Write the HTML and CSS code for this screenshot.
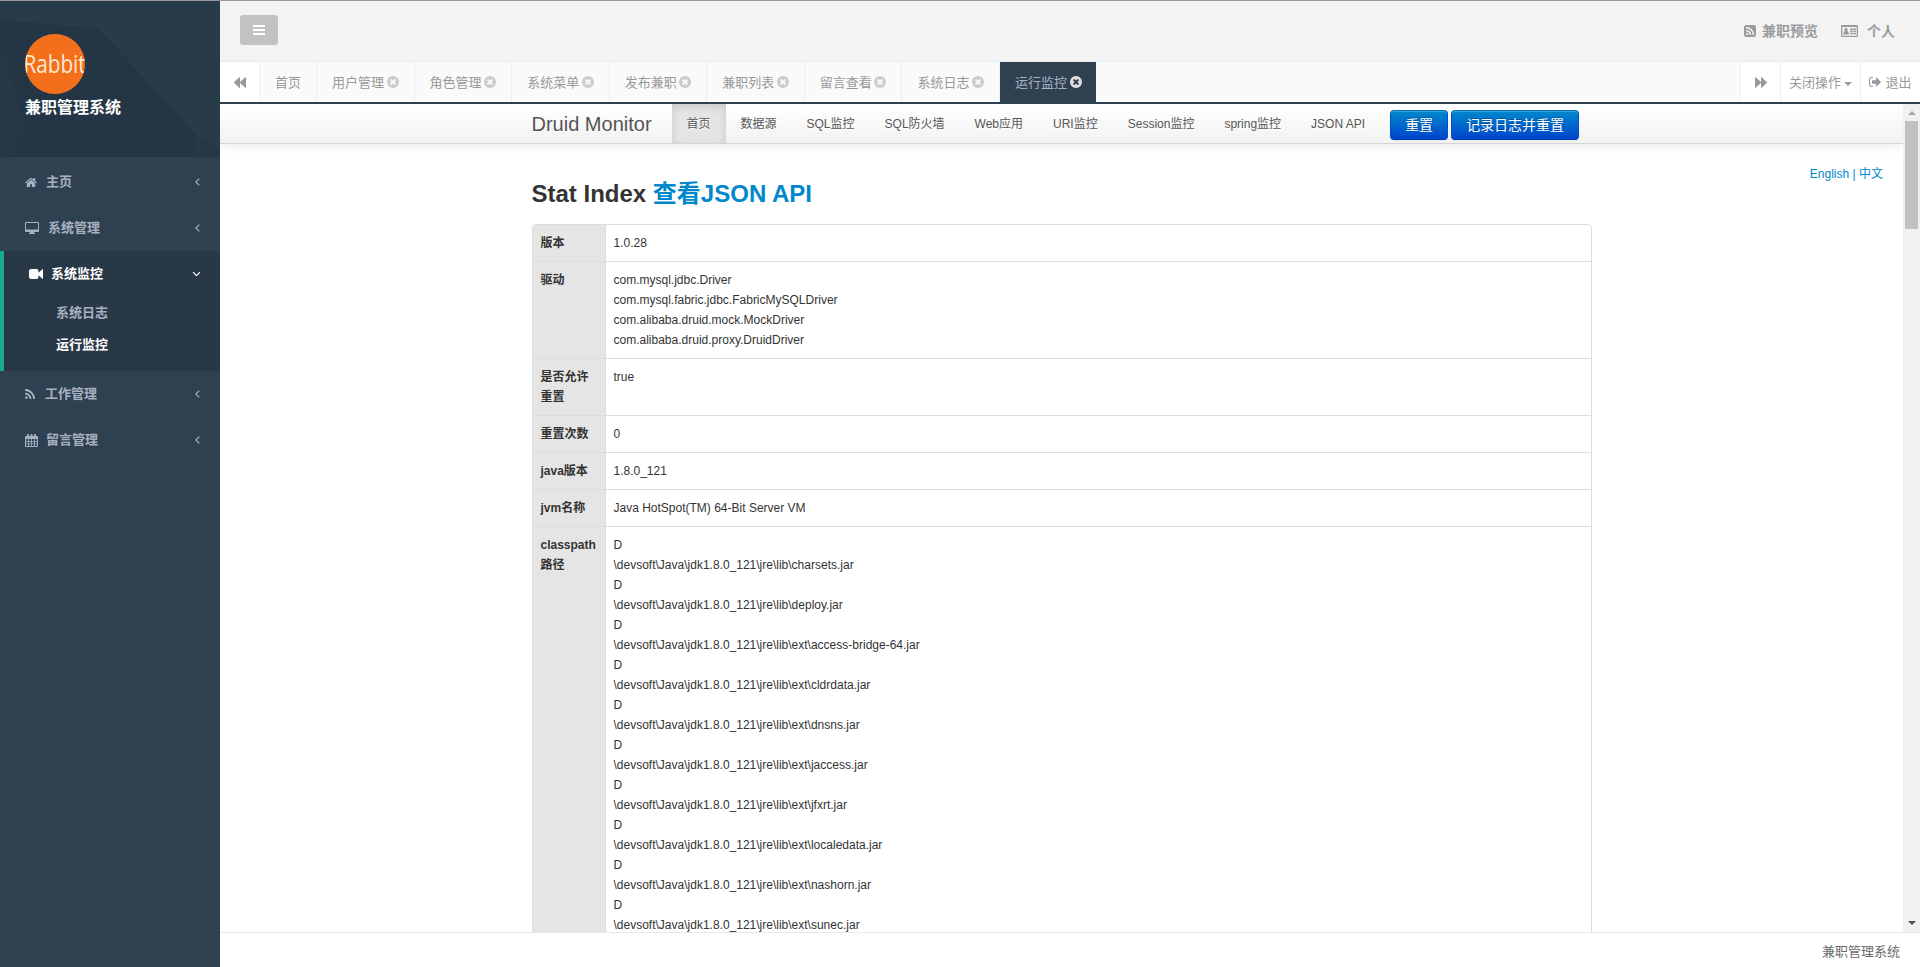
FILE: index.html
```html
<!DOCTYPE html>
<html lang="zh-CN">
  <head>
    <meta charset="UTF-8" />
    <meta name="viewport" content="width=device-width, initial-scale=1.0" />
    <title>兼职管理系统</title>
    <link rel="stylesheet" href="styles.css">
  </head>
  <body>
    <svg class="symbols">
      <symbol id="home" viewBox="64 192 1664 1408"><path d="M1472 992v480q0 26-19 45t-45 19h-384v-384h-256v384h-384q-26 0-45-19t-19-45v-480q0-1 .5-3t.5-3l575-474 575 474q1 2 1 6zm223-69l-62 74q-8 9-21 11h-3q-13 0-21-7l-692-577-692 577q-12 8-24 7-13-2-21-11l-62-74q-8-10-7-23.5t11-21.5l719-599q32-26 76-26t76 26l244 204v-195q0-14 9-23t23-9h192q14 0 23 9t9 23v408l219 182q10 8 11 21.5t-7 23.5z"/></symbol>
      <symbol id="rss" viewBox="192 128 1408 1408"><path d="M576 1344q0 80-56 136t-136 56-136-56-56-136 56-136 136-56 136 56 56 136zm512 123q2 28-17 48-18 21-47 21h-135q-25 0-43-16.5t-20-41.5q-22-229-184.5-391.5t-391.5-184.5q-25-2-41.5-20t-16.5-43v-135q0-29 21-47 17-17 43-17h5q160 13 306 80.5t259 181.5q114 113 181.5 259t80.5 306zm512 2q2 27-18 47-18 20-46 20h-143q-26 0-44.5-17.5t-19.5-42.5q-12-215-101-408.5t-231.5-336-336-231.5-408.5-102q-25-1-42.5-19.5t-17.5-43.5v-143q0-28 20-46 18-18 44-18h3q262 13 501.5 120t425.5 294q187 186 294 425.5t120 501.5z"/></symbol>
      <symbol id="close" viewBox="128 128 1536 1536"><path d="M1277 1122q0-26-19-45l-181-181 181-181q19-19 19-45 0-27-19-46l-90-90q-19-19-46-19-26 0-45 19l-181 181-181-181q-19-19-45-19-27 0-46 19l-90 90q-19 19-19 46 0 26 19 45l181 181-181 181q-19 19-19 45 0 27 19 46l90 90q19 19 46 19 26 0 45-19l181-181 181 181q19 19 45 19 27 0 46-19l90-90q19-19 19-46zm387-226q0 209-103 385.5t-279.5 279.5-385.5 103-385.5-103-279.5-279.5-103-385.5 103-385.5 279.5-279.5 385.5-103 385.5 103 279.5 279.5 103 385.5z"/></symbol>
      <symbol id="desktop" viewBox="0 0 14 12"><path fill-rule="evenodd" d="M1 0h12a1 1 0 0 1 1 1v8a1 1 0 0 1-1 1H9v1h1v1H4v-1h1v-1H1a1 1 0 0 1-1-1V1a1 1 0 0 1 1-1zm0 1v6.6h12V1z"/></symbol>
      <symbol id="video" viewBox="0 0 14 10"><path d="M2 0h5.5a2 2 0 0 1 2 2v1.8L13 .4q1-.5 1 .4v8.4q0 .9-1 .4L9.500 6.200V8a2 2 0 0 1-2 2H2a2 2 0 0 1-2-2V2a2 2 0 0 1 2-2z"/></symbol>
      <symbol id="calendar" viewBox="0 0 13 13"><path fill-rule="evenodd" d="M1 2h1V.8a.8.8 0 0 1 .8-.8h.4a.8.8 0 0 1 .8.800V2h1.500V.8a.8.8 0 0 1 .8-.8h.4a.8.8 0 0 1 .8.800V2H9V.8a.8.8 0 0 1 .8-.8h.4a.8.8 0 0 1 .8.800V2h1a1 1 0 0 1 1 1v9a1 1 0 0 1-1 1H1a1 1 0 0 1-1-1V3a1 1 0 0 1 1-1zM1 5v1.900h2V5zm2.800 0v1.900h2.300V5zm3.100 0v1.900h2.300V5zM10 5v1.900h2V5zM1 7.700v1.800h2V7.700zm2.800 0v1.800h2.300V7.700zm3.100 0v1.800h2.300V7.700zm3.100 0v1.800h2V7.700zM1 10.300V12h2v-1.700zm2.800 0V12h2.300v-1.700zm3.100 0V12h2.300v-1.700zm3.100 0V12h2v-1.700z"/></symbol>
      <symbol id="backward" viewBox="0 0 12 11"><path d="M6 0v5L11.300.2q.7-.5.7.3v10q0 .8-.7.3L6 6v4.500q0 .8-.7.3L.2 6q-.4-.5 0-1L5.300.2Q6-.3 6 .5z"/></symbol>
      <symbol id="rss-square" viewBox="0 0 12 12"><path fill-rule="evenodd" d="M2.200 0h7.600A2.200 2.200 0 0 1 12 2.200v7.600A2.200 2.200 0 0 1 9.800 12H2.200A2.200 2.200 0 0 1 0 9.800V2.200A2.200 2.200 0 0 1 2.200 0zM3 8a1 1 0 1 0 .01 0zM2 5v1.400Q5.500 6.700 5.800 10h1.400Q6.900 5.300 2 5zm0-3v1.400Q8.400 3.800 8.700 10H10Q9.700 2.300 2 2z"/></symbol>
      <symbol id="card" viewBox="0 0 17 12"><path fill-rule="evenodd" d="M1.200 0h14.600A1.200 1.200 0 0 1 17 1.200v9.600a1.200 1.200 0 0 1-1.200 1.200H1.200A1.200 1.200 0 0 1 0 10.800V1.200A1.200 1.200 0 0 1 1.200 0zM1.300 2v8.700h14.400V2z"/><path d="M5 3a1.700 1.700 0 0 1 1.200 2.900Q8 6.400 8 9.500H2.200Q2.200 6.400 3.900 5.900A1.700 1.700 0 0 1 5 3zM9 3.500h6v1.500H9zM9 5.700h2.700v1.500H9zm3.200 0H15v1.500h-2.800zM9 8h6v1.300H9z"/></symbol>
      <symbol id="sign-out" viewBox="0 0 12 10"><path d="M4 0v1.100H2.500Q1.100 1.100 1.100 2.500v5q0 1.400 1.400 1.400H4V10H2.300Q0 10 0 7.700V2.300Q0 0 2.300 0z"/><path d="M3.500 3.300H7V1.100q0-.8.7-.3l4 3.800q.4.400 0 .8l-4 3.800q-.7.500-.7-.3V6.700H3.500q-.5 0-.5-.5V3.800q0-.5.5-.5z"/></symbol>
      <symbol id="angle" viewBox="0 0 5 8"><path fill="none" stroke="currentColor" stroke-width="1.200" d="M4.300.600.900 4l3.400 3.400"/></symbol>
    </svg>

    <aside class="sidebar">
      <div class="profile">
        <svg class="profile-bg" viewBox="0 0 220 156" preserveAspectRatio="none">
          <path fill="#273b49" d="M0 0h120L99 28 0 19z"/>
          <path fill="#283b49" d="M120 0h100v146l-24-12L99 28z"/>
          <path fill="#243645" d="M99 28l97 106v22H0V19z"/>
          <path fill="#253847" d="M0 40l25 83-15 33H0z"/>
        </svg>
        <div class="logo"><span>Rabbit</span></div>
        <strong class="profile-name">兼职管理系统</strong>
      </div>
      <ul class="menu">
        <li><a href="#"><svg class="i-home"><use href="#home"/></svg>主页<svg class="arrow"><use href="#angle"/></svg></a></li>
        <li><a href="#"><svg class="i-desktop"><use href="#desktop"/></svg>系统管理<svg class="arrow"><use href="#angle"/></svg></a></li>
        <li class="active">
          <a href="#"><svg class="i-video"><use href="#video"/></svg>系统监控<svg class="arrow open"><use href="#angle"/></svg></a>
          <ul class="submenu">
            <li><a href="#">系统日志</a></li>
            <li><a href="#" class="current">运行监控</a></li>
          </ul>
        </li>
        <li><a href="#"><svg class="i-rss"><use href="#rss"/></svg>工作管理<svg class="arrow"><use href="#angle"/></svg></a></li>
        <li><a href="#"><svg class="i-calendar"><use href="#calendar"/></svg>留言管理<svg class="arrow"><use href="#angle"/></svg></a></li>
      </ul>
    </aside>

    <div class="page">
      <header class="topbar">
        <button class="toggle"><span></span><span></span><span></span></button>
        <div class="toplinks">
          <a href="#"><svg class="i-square"><use href="#rss-square"/></svg>兼职预览</a>
          <a href="#"><svg class="i-card"><use href="#card"/></svg>个人</a>
        </div>
      </header>

      <nav class="tabs">
        <button class="tab-btn roll"><svg><use href="#backward"/></svg></button>
        <div class="tab-list">
          <a href="#" class="home-tab">首页</a>
          <a href="#">用户管理<svg><use href="#close"/></svg></a>
          <a href="#">角色管理<svg><use href="#close"/></svg></a>
          <a href="#">系统菜单<svg><use href="#close"/></svg></a>
          <a href="#">发布兼职<svg><use href="#close"/></svg></a>
          <a href="#">兼职列表<svg><use href="#close"/></svg></a>
          <a href="#">留言查看<svg><use href="#close"/></svg></a>
          <a href="#">系统日志<svg><use href="#close"/></svg></a>
          <a href="#" class="active">运行监控<svg><use href="#close"/></svg></a>
        </div>
        <button class="tab-btn roll right"><svg><use href="#backward"/></svg></button>
        <button class="tab-btn ops">关闭操作<span class="caret"></span></button>
        <button class="tab-btn exit"><svg><use href="#sign-out"/></svg>退出</button>
      </nav>

      <div class="frame">
        <main class="druid">
          <div class="navbar">
            <div class="container">
              <a href="#" class="brand">Druid Monitor</a>
              <ul class="nav">
                <li class="active"><a href="#">首页</a></li>
                <li><a href="#">数据源</a></li>
                <li><a href="#">SQL监控</a></li>
                <li><a href="#">SQL防火墙</a></li>
                <li><a href="#">Web应用</a></li>
                <li><a href="#">URI监控</a></li>
                <li><a href="#">Session监控</a></li>
                <li><a href="#">spring监控</a></li>
                <li><a href="#">JSON API</a></li>
              </ul>
              <button class="btn">重置</button>
              <button class="btn">记录日志并重置</button>
            </div>
          </div>
          <div class="lang"><a href="#">English</a> | <a href="#">中文</a></div>
          <div class="container content">
            <h3>Stat Index <a href="#">查看JSON API</a></h3>
            <table>
              <tr><th>版本</th><td>1.0.28</td></tr>
              <tr><th>驱动</th><td>com.mysql.jdbc.Driver<br>com.mysql.fabric.jdbc.FabricMySQLDriver<br>com.alibaba.druid.mock.MockDriver<br>com.alibaba.druid.proxy.DruidDriver</td></tr>
              <tr><th>是否允许重置</th><td>true</td></tr>
              <tr><th>重置次数</th><td>0</td></tr>
              <tr><th>java版本</th><td>1.8.0_121</td></tr>
              <tr><th>jvm名称</th><td>Java HotSpot(TM) 64-Bit Server VM</td></tr>
              <tr>
                <th>classpath路径</th>
                <td>
                  D<br>\devsoft\Java\jdk1.8.0_121\jre\lib\charsets.jar<br>
                  D<br>\devsoft\Java\jdk1.8.0_121\jre\lib\deploy.jar<br>
                  D<br>\devsoft\Java\jdk1.8.0_121\jre\lib\ext\access-bridge-64.jar<br>
                  D<br>\devsoft\Java\jdk1.8.0_121\jre\lib\ext\cldrdata.jar<br>
                  D<br>\devsoft\Java\jdk1.8.0_121\jre\lib\ext\dnsns.jar<br>
                  D<br>\devsoft\Java\jdk1.8.0_121\jre\lib\ext\jaccess.jar<br>
                  D<br>\devsoft\Java\jdk1.8.0_121\jre\lib\ext\jfxrt.jar<br>
                  D<br>\devsoft\Java\jdk1.8.0_121\jre\lib\ext\localedata.jar<br>
                  D<br>\devsoft\Java\jdk1.8.0_121\jre\lib\ext\nashorn.jar<br>
                  D<br>\devsoft\Java\jdk1.8.0_121\jre\lib\ext\sunec.jar
                </td>
              </tr>
            </table>
          </div>
        </main>
        <div class="scrollbar">
          <span class="up"></span>
          <span class="thumb"></span>
          <span class="down"></span>
        </div>
      </div>

      <footer>兼职管理系统</footer>
    </div>
  </body>
</html>
```
FILE: styles.css
```css
* {
  box-sizing: border-box;
}
body {
  display: flex;
  height: 967px;
  margin: 0;
  overflow: hidden;
  border-top: 1px solid #999;
  font-family: "Liberation Sans", "Noto Sans CJK SC", sans-serif;
  font-size: 13px;
  color: #676a6c;
  background-color: #fff;
}
a {
  color: inherit;
  text-decoration: none;
}
ul {
  list-style: none;
  margin: 0;
  padding: 0;
}
button {
  font-family: inherit;
  padding: 0;
  border: none;
  cursor: pointer;
}
svg {
  flex: none;
  fill: currentColor;
}
.symbols {
  display: none;
}

/* sidebar */
.sidebar {
  flex: none;
  width: 220px;
  background-color: #2f4050;
  color: #a7b1c2;
}
.profile {
  position: relative;
  height: 156px;
  padding: 33px 25px 0;
  background-color: #253847;
}
.profile-bg {
  position: absolute;
  left: 0;
  top: 0;
  width: 220px;
  height: 156px;
}
.logo {
  position: relative;
  display: flex;
  align-items: center;
  justify-content: center;
  width: 60px;
  height: 60px;
  overflow: hidden;
  border-radius: 50%;
  background-color: #f36f1b;
  color: #fbe8d0;
  font-family: "Open Sans", sans-serif;
  font-size: 25px;
  line-height: 58px;
}
.logo span {
  padding-bottom: 2px;
  transform: scaleX(0.83);
}
.profile-name {
  position: relative;
  display: block;
  line-height: 28px;
  font-size: 16px;
  color: #fff;
}
.menu {
  padding-top: 2px;
}
.menu > li > a {
  display: flex;
  align-items: center;
  height: 46px;
  padding: 0 20px 3px 25px;
  font-weight: 600;
}
.menu > li > a svg {
  margin-top: 3px;
}
.menu .active {
  height: 120px;
  border-left: 4px solid #19aa8d;
  background-color: #293846;
}
.menu > .active > a {
  color: #fff;
}
.i-home {
  width: 12px;
  height: 11px;
  margin-right: 9px;
}
.i-desktop {
  width: 14px;
  height: 12px;
  margin-right: 9px;
}
.i-video {
  width: 14px;
  height: 10px;
  margin-right: 8px;
}
.i-rss {
  width: 10px;
  height: 10px;
  margin-right: 10px;
}
.i-calendar {
  width: 13px;
  height: 13px;
  margin-right: 8px;
}
.arrow {
  width: 5px;
  height: 8px;
  margin-left: auto;
}
.arrow.open {
  margin-right: 1px;
  transform: rotate(-90deg);
}
.submenu a {
  display: block;
  height: 32px;
  padding-left: 52px;
  line-height: 32px;
  font-weight: 600;
}
.submenu .current {
  color: #fff;
}

/* top bar */
.page {
  display: flex;
  flex-direction: column;
  flex: 1;
  min-width: 0;
}
.topbar {
  display: flex;
  justify-content: space-between;
  height: 61px;
  padding: 14px 25px 0 20px;
  border-bottom: 1px solid #e7eaec;
  background-color: #f3f3f4;
}
.toggle {
  display: flex;
  flex-direction: column;
  align-items: center;
  justify-content: center;
  gap: 2px;
  width: 38px;
  height: 30px;
  border-radius: 3px;
  background-color: #c2c2c2;
}
.toggle span {
  width: 12px;
  height: 2px;
  background-color: #fff;
}
.toplinks {
  display: flex;
  gap: 23px;
  height: 30px;
  color: #999c9e;
  font-size: 14px;
  font-weight: 600;
}
.toplinks a {
  display: flex;
  align-items: center;
}
.toplinks svg {
  margin-top: 2px;
}
.i-square {
  width: 12px;
  height: 12px;
  margin-right: 6px;
}
.i-card {
  width: 17px;
  height: 12px;
  margin-right: 9px;
}

/* tabs */
.tabs {
  display: flex;
  height: 42px;
  border-bottom: 2px solid #2f4050;
  background-color: #fafafa;
  color: #999;
}
.tab-list {
  display: flex;
  flex: 1;
}
.tab-list a {
  display: flex;
  align-items: center;
  justify-content: space-between;
  width: 97.57px;
  padding: 0 15px 2px;
  border-right: 1px solid #eee;
}
.tab-list .home-tab {
  width: 57px;
}
.tab-list svg {
  width: 12px;
  height: 12px;
  margin-top: 2px;
  color: #ccc;
}
.tab-list .active {
  width: 96px;
  padding-right: 14px;
  border: none;
  background-color: #2f4050;
  color: #a7b1c2;
}
.tab-list .active svg {
  color: #ddd;
}
.tab-btn {
  display: flex;
  align-items: center;
  justify-content: center;
  height: 40px;
  border-left: 1px solid #eee;
  background-color: #fff;
  color: #999;
  font-size: 13px;
}
.roll {
  width: 40px;
  padding-top: 1px;
  border-left: none;
  border-right: 1px solid #eee;
}
.roll svg {
  width: 12px;
  height: 11px;
}
.roll.right {
  border-left: 1px solid #eee;
  border-right: none;
}
.roll.right svg {
  transform: scaleX(-1);
}
.ops {
  width: 80px;
  padding-bottom: 1px;
}
.caret {
  margin: 4px 0 0 3px;
  border: 4px solid transparent;
  border-top-color: #999;
  border-bottom: none;
}
.exit {
  width: 60px;
  padding-bottom: 2px;
}
.exit svg {
  width: 12px;
  height: 10px;
  margin: 2px 4px 0 0;
}

/* druid monitor */
.frame {
  display: flex;
  height: 828px;
  overflow: hidden;
}
.druid {
  flex: 1;
  font-size: 12px;
  line-height: 20px;
  color: #333;
}
.container {
  width: 1060px;
  margin-left: 311.5px;
}
.navbar {
  height: 40px;
  border-bottom: 1px solid #d4d4d4;
  background-image: linear-gradient(#fff, #f2f2f2);
  box-shadow: 0 1px 10px rgba(0, 0, 0, 0.1);
}
.navbar .container {
  display: flex;
  white-space: nowrap;
}
.brand {
  width: 140px;
  line-height: 40px;
  font-size: 20px;
  color: #555;
  text-shadow: 0 1px 0 #fff;
}
.nav {
  display: flex;
  margin-right: 10px;
}
.nav a {
  display: block;
  height: 39px;
  padding: 0 15px;
  line-height: 40px;
  color: #555;
  text-shadow: 0 1px 0 #fff;
}
.nav .active a {
  background-color: #e5e5e5;
  box-shadow: inset 0 3px 8px rgba(0, 0, 0, 0.125);
}
.btn {
  height: 30px;
  margin: 6px 3px 0 0;
  padding: 0 14px 2px;
  border: 1px solid #0055bb;
  border-color: #0074b8 #0050c0 #003ca8;
  border-radius: 4px;
  background-image: linear-gradient(#0088cc, #0044cc);
  box-shadow: inset 0 1px 0 rgba(255, 255, 255, 0.2), 0 1px 2px rgba(0, 0, 0, 0.05);
  color: #fff;
  font-size: 14px;
  text-shadow: 0 -1px 0 rgba(0, 0, 0, 0.25);
}
.lang {
  height: 20px;
  margin: 20px 20px 0 0;
  text-align: right;
  color: #0088cc;
}
h3 {
  height: 40px;
  margin: 0 0 10px;
  line-height: 40px;
  font-size: 24px;
}
h3 a {
  color: #0088cc;
}
.content {
  margin-top: -10px;
}
table {
  width: 1060px;
  border: 1px solid #ddd;
  border-radius: 4px;
  border-spacing: 0;
  table-layout: fixed;
  overflow: hidden;
}
th,
td {
  padding: 8px;
  border-top: 1px solid #ddd;
  text-align: left;
  vertical-align: top;
}
tr:first-child > * {
  border-top: none;
}
th {
  width: 72px;
  background-color: #e5e5e5;
}
td {
  border-left: 1px solid #ddd;
}
.scrollbar {
  display: flex;
  flex-direction: column;
  align-items: center;
  width: 17px;
  padding: 7px 0;
  background-color: #f1f1f1;
}
.scrollbar .up {
  border: 4px solid transparent;
  border-top: none;
  border-bottom-color: #a3a3a3;
}
.scrollbar .down {
  margin-top: auto;
  border: 4px solid transparent;
  border-bottom: none;
  border-top-color: #505050;
}
.thumb {
  width: 13px;
  height: 108px;
  margin-top: 6px;
  background-color: #c1c1c1;
}
footer {
  height: 35px;
  padding-right: 20px;
  border-top: 1px solid #e7eaec;
  line-height: 38px;
  text-align: right;
}
```
